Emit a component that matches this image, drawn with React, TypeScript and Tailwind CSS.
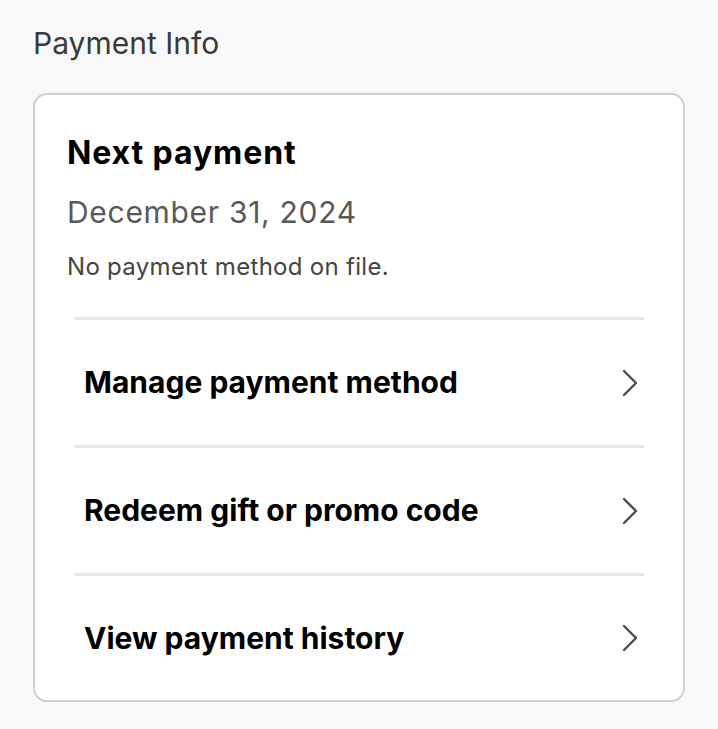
const ROWS = ["Manage payment method", "Redeem gift or promo code", "View payment history"];

function Chevron() {
  return (
    <svg width="16" height="28" viewBox="0 0 16 28" fill="none" className="text-[#4a4a4a]">
      <polyline
        points="2,2 14,14 2,26"
        stroke="currentColor"
        strokeWidth="2.4"
        strokeLinecap="round"
        strokeLinejoin="round"
      />
    </svg>
  );
}

export default function App() {
  return (
    <div
      className="min-h-[729px] bg-[#f8f8f8] px-[33px] pt-[24px] pb-[28px]"
      style={{ fontFamily: "Inter, 'Noto Sans', sans-serif" }}
    >
      <h2 className="text-[30px] leading-[38px] text-[#3a3a3a]">Payment Info</h2>
      <div className="mt-[31px] rounded-[14px] border-2 border-[#d0d0d0] bg-white">
        <div className="px-[32px] pt-[38px] pb-[35px]">
          <div className="text-[32px] leading-[40px] font-bold tracking-[0.9px] text-black">Next payment</div>
          <div className="mt-[21px] text-[30px] leading-[36px] tracking-[0.7px] text-[#595959]">
            December 31, 2024
          </div>
          <div className="mt-[22px] text-[24px] leading-[30px] tracking-[0.3px] text-[#444]">
            No payment method on file.
          </div>
        </div>
        <div className="mx-[39px]">
          {ROWS.map((label, i) => (
            <div
              key={label}
              className={
                i < ROWS.length - 1
                  ? "flex h-[128px] items-center justify-between border-t-[3px] border-[#e6e6e6] pr-[6px] pl-[10px]"
                  : "flex h-[127px] items-center justify-between border-t-[3px] border-[#e6e6e6] pr-[6px] pl-[10px]"
              }
            >
              <span className="text-[30px] font-bold text-black">{label}</span>
              <Chevron />
            </div>
          ))}
        </div>
      </div>
    </div>
  );
}
